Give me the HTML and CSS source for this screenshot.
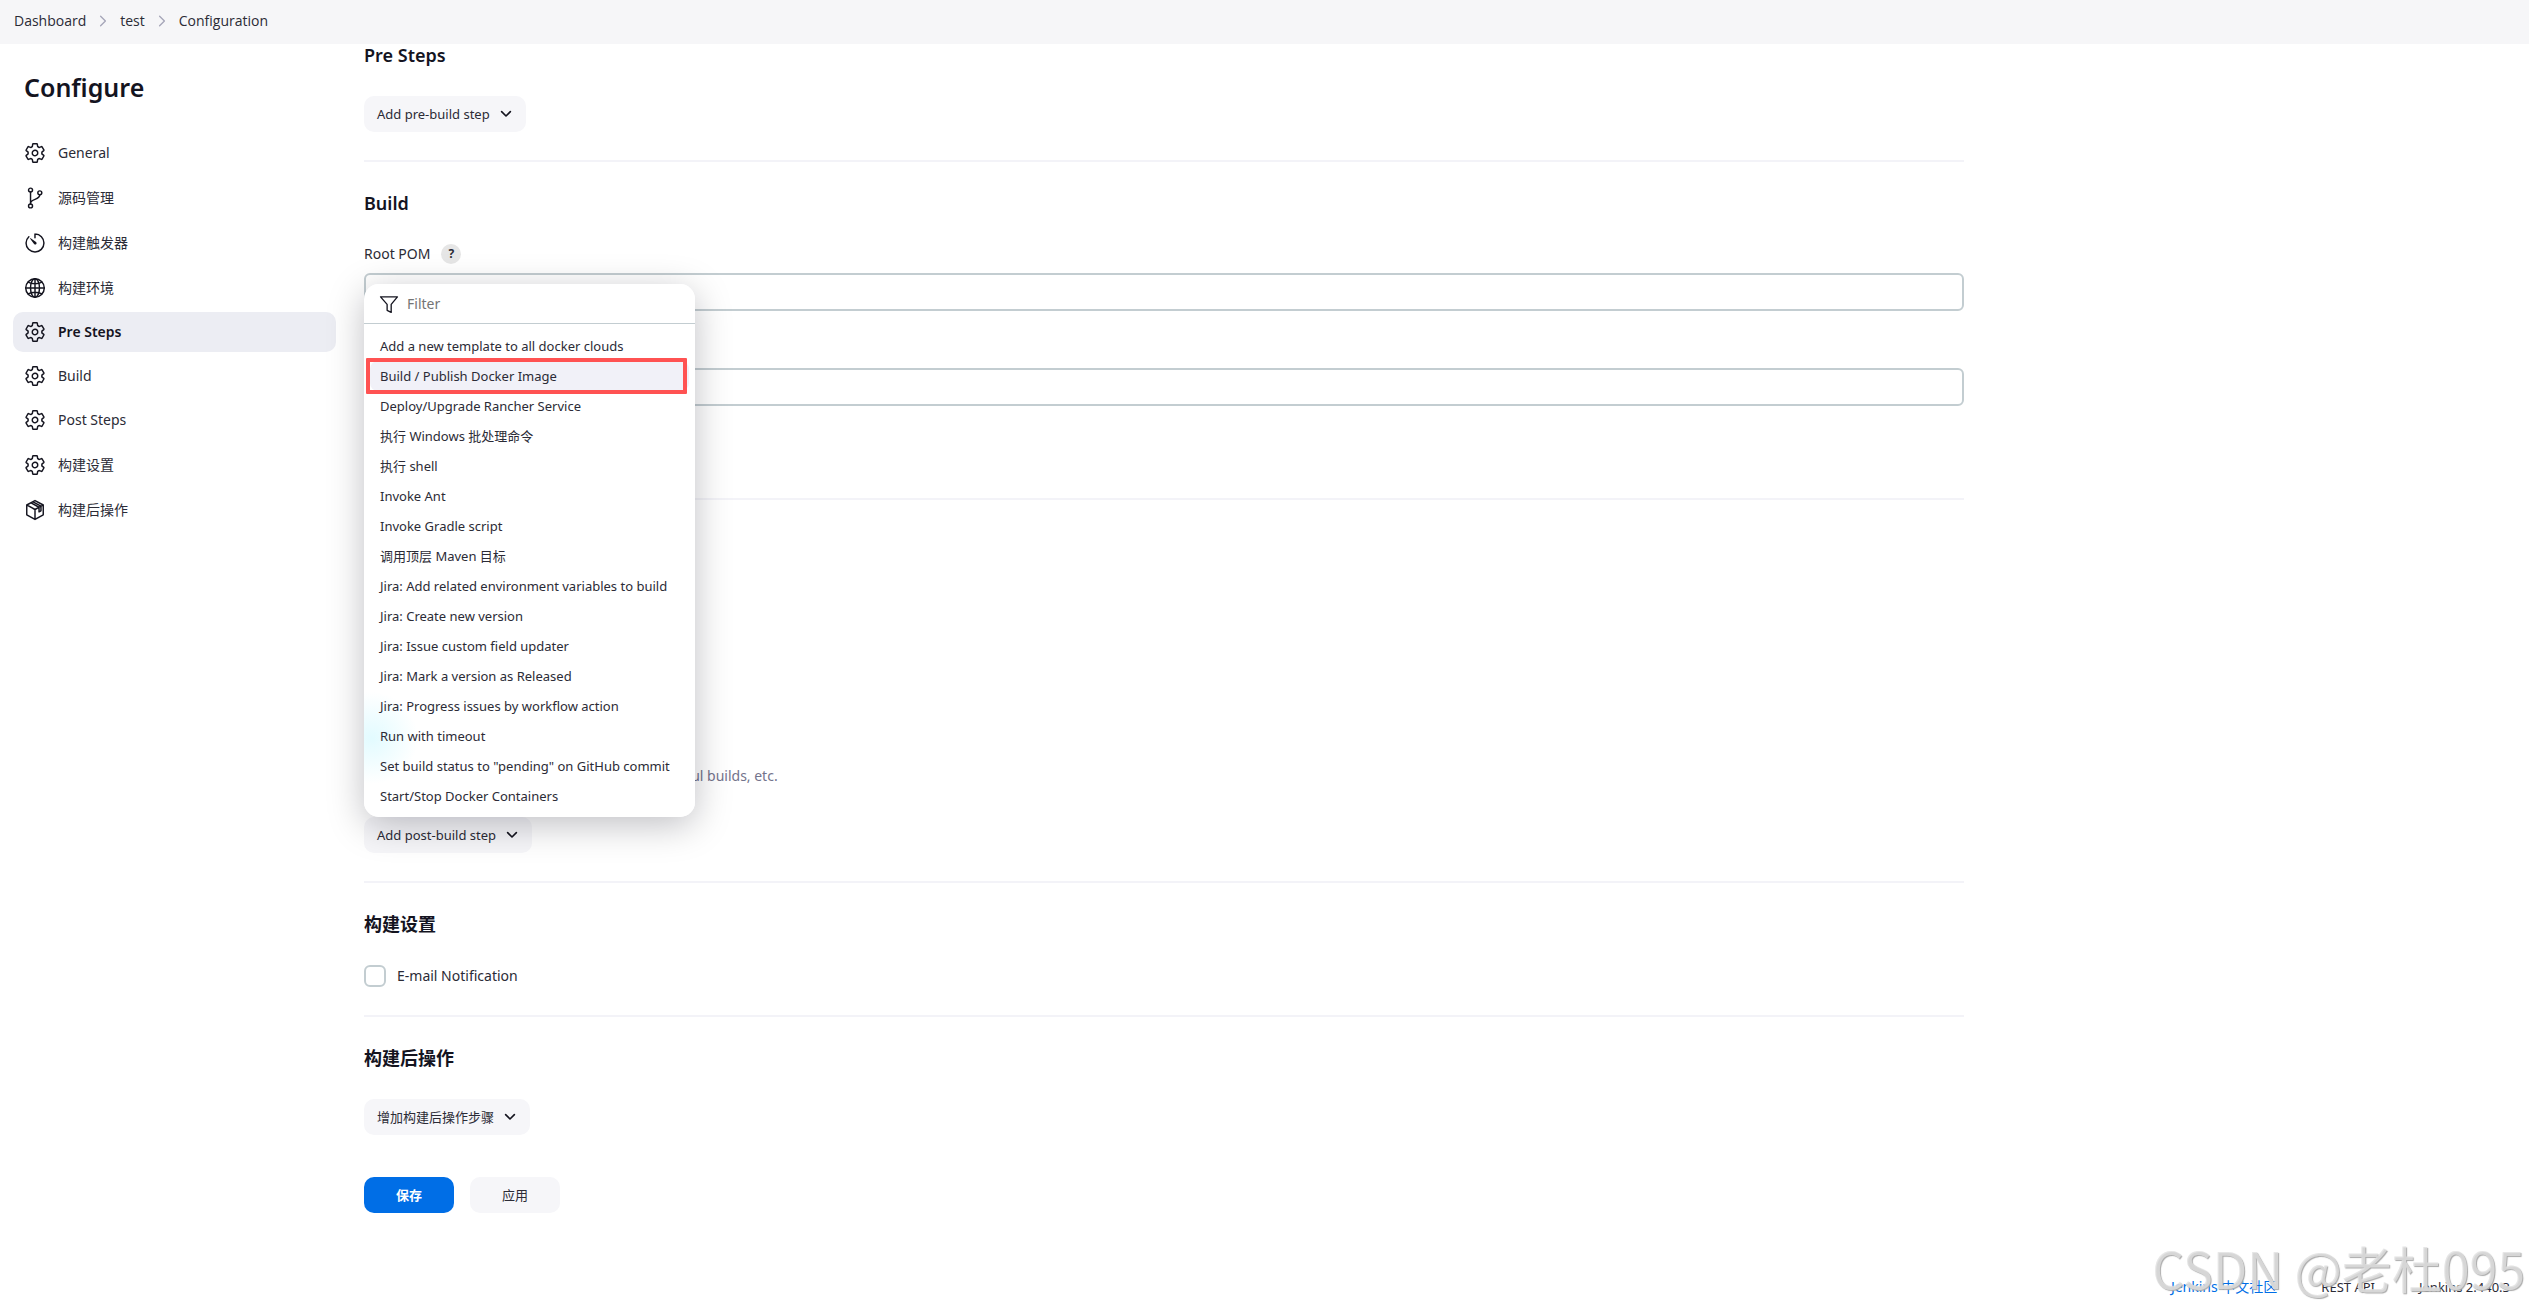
FILE: index.html
```
<!DOCTYPE html>
<html lang="en">
<head>
<meta charset="UTF-8">
<meta name="viewport" content="width=device-width, initial-scale=1.0">
<title>test Config [Jenkins]</title>
<link rel="stylesheet" href="styles.css">
</head>
<body>
    <svg class="sprite" aria-hidden="true">
        <symbol id="icon-settings" viewBox="0 0 512 512"><path d="M262.29 192.31a64 64 0 1057.4 57.4 64.13 64.13 0 00-57.4-57.4zM416.39 256a154.34 154.34 0 01-1.53 20.79l45.21 35.46a10.81 10.81 0 012.45 13.75l-42.77 74a10.81 10.81 0 01-13.14 4.59l-44.9-18.08a16.11 16.11 0 00-15.17 1.75A164.48 164.48 0 01325 400.8a15.94 15.94 0 00-8.82 12.14l-6.73 47.89a11.08 11.08 0 01-10.68 9.17h-85.54a11.11 11.11 0 01-10.69-8.87l-6.72-47.82a16.07 16.07 0 00-9-12.22 155.3 155.3 0 01-21.46-12.57 16 16 0 00-15.11-1.71l-44.89 18.07a10.81 10.81 0 01-13.14-4.58l-42.77-74a10.8 10.8 0 012.45-13.75l38.21-30a16.05 16.05 0 006-14.08c-.36-4.17-.58-8.33-.58-12.5s.21-8.27.58-12.35a16 16 0 00-6.07-13.94l-38.19-30A10.81 10.81 0 0149.48 186l42.77-74a10.81 10.81 0 0113.14-4.59l44.9 18.08a16.11 16.11 0 0015.17-1.75A164.48 164.48 0 01187 111.2a15.94 15.94 0 008.82-12.14l6.73-47.89A11.08 11.08 0 01213.23 42h85.54a11.11 11.11 0 0110.69 8.87l6.72 47.82a16.07 16.07 0 009 12.22 155.3 155.3 0 0121.46 12.57 16 16 0 0015.11 1.71l44.89-18.07a10.81 10.81 0 0113.14 4.58l42.77 74a10.8 10.8 0 01-2.45 13.75l-38.21 30a16.05 16.05 0 00-6.05 14.08c.33 4.14.55 8.3.55 12.47z"/></symbol>
        <symbol id="icon-branch" viewBox="0 0 512 512"><circle cx="152" cy="72" r="46"/><circle cx="152" cy="440" r="46"/><circle cx="368" cy="136" r="46"/><path d="M152 394V118M368 182c0 130-216 80-216 200"/></symbol>
        <symbol id="icon-timer" viewBox="0 0 512 512"><path d="M112.91 112A205 205 0 0048 256c-1.18 113 92 208 208 208 114 .2 208-90 208-208 0-112-90-208-204-208a4.36 4.36 0 00-4.5 4.37V136"/><path class="fill" d="M233.38 278.63l-90-124a9 9 0 0112-12l124 90a32.5 32.5 0 01-37.25 53.26 33.21 33.21 0 01-8.75-7.26z"/></symbol>
        <symbol id="icon-globe" viewBox="0 0 512 512"><circle cx="256" cy="256" r="216"/><ellipse cx="256" cy="256" rx="104" ry="216"/><path d="M256 40v432M40 256h432M96 118c90 50 230 50 320 0M96 394c90-50 230-50 320 0"/></symbol>
        <symbol id="icon-cube" viewBox="0 0 512 512"><path d="M256 36L448 140V368L256 476 64 368V140zM72 144L256 244 440 144M256 244V468M164 92L350 192V300L395 275V168L210 66"/></symbol>
        <symbol id="icon-filter" viewBox="0 0 512 512"><path d="M40 72h432L312 266v206l-104-54V266z"/></symbol>
        <symbol id="icon-chevron" viewBox="0 0 512 512"><path d="M96 168l160 160 160-160"/></symbol>
        <symbol id="icon-crumb" viewBox="0 0 512 512"><path d="M168 80l176 176-176 176"/></symbol>
    </svg>

    <nav id="breadcrumbs">
        <a href="#">Dashboard</a>
        <svg class="crumb"><use href="#icon-crumb"/></svg>
        <a href="#">test</a>
        <svg class="crumb"><use href="#icon-crumb"/></svg>
        <a href="#">Configuration</a>
    </nav>

    <div id="page-body">
        <aside id="side-panel">
            <h1>Configure</h1>
            <nav class="tasks">
                <a class="task" href="#"><svg class="icon"><use href="#icon-settings"/></svg>General</a>
                <a class="task" href="#" lang="zh"><svg class="icon"><use href="#icon-branch"/></svg>源码管理</a>
                <a class="task" href="#" lang="zh"><svg class="icon"><use href="#icon-timer"/></svg>构建触发器</a>
                <a class="task" href="#" lang="zh"><svg class="icon"><use href="#icon-globe"/></svg>构建环境</a>
                <a class="task active" href="#"><svg class="icon"><use href="#icon-settings"/></svg>Pre Steps</a>
                <a class="task" href="#"><svg class="icon"><use href="#icon-settings"/></svg>Build</a>
                <a class="task" href="#"><svg class="icon"><use href="#icon-settings"/></svg>Post Steps</a>
                <a class="task" href="#" lang="zh"><svg class="icon"><use href="#icon-settings"/></svg>构建设置</a>
                <a class="task" href="#" lang="zh"><svg class="icon"><use href="#icon-cube"/></svg>构建后操作</a>
            </nav>
        </aside>

        <main id="main-panel">
            <section class="pre-steps">
                <h2>Pre Steps</h2>
                <button class="btn" type="button">Add pre-build step <svg class="chevron"><use href="#icon-chevron"/></svg></button>
            </section>

            <section class="build">
                <h2>Build</h2>
                <div class="field">
                    <div class="field-label">
                        <label for="root-pom">Root POM</label>
                        <button class="help" type="button">?</button>
                    </div>
                    <input id="root-pom" class="text-input" type="text">
                </div>
                <input class="text-input" type="text" aria-label="Goals and options">

                <div class="dropdown">
                    <div class="dropdown-filter">
                        <svg class="icon"><use href="#icon-filter"/></svg>
                        <input type="text" placeholder="Filter" aria-label="Filter">
                    </div>
                    <div class="dropdown-items">
                        <button type="button">Add a new template to all docker clouds</button>
                        <button type="button" class="selected">Build / Publish Docker Image</button>
                        <button type="button">Deploy/Upgrade Rancher Service</button>
                        <button type="button">执行 Windows 批处理命令</button>
                        <button type="button">执行 shell</button>
                        <button type="button">Invoke Ant</button>
                        <button type="button">Invoke Gradle script</button>
                        <button type="button">调用顶层 Maven 目标</button>
                        <button type="button">Jira: Add related environment variables to build</button>
                        <button type="button">Jira: Create new version</button>
                        <button type="button">Jira: Issue custom field updater</button>
                        <button type="button">Jira: Mark a version as Released</button>
                        <button type="button">Jira: Progress issues by workflow action</button>
                        <button type="button">Run with timeout</button>
                        <button type="button">Set build status to "pending" on GitHub commit</button>
                        <button type="button">Start/Stop Docker Containers</button>
                    </div>
                </div>
            </section>

            <section class="post-steps">
                <p class="description">Should the post-build steps run only for successful builds, etc.</p>
                <button class="btn" type="button">Add post-build step <svg class="chevron"><use href="#icon-chevron"/></svg></button>
            </section>

            <section>
                <h2>构建设置</h2>
                <label class="checkbox"><input type="checkbox">E-mail Notification</label>
            </section>

            <section class="post-build">
                <h2>构建后操作</h2>
                <button class="btn" type="button">增加构建后操作步骤 <svg class="chevron"><use href="#icon-chevron"/></svg></button>
            </section>

            <div class="actions">
                <button class="btn primary" type="submit">保存</button>
                <button class="btn" type="button">应用</button>
            </div>
        </main>
    </div>

    <footer>
        <a class="community" href="#">Jenkins 中文社区</a>
        <a href="#">REST API</a>
        <a href="#">Jenkins 2.440.3</a>
    </footer>
    <div class="watermark">CSDN @老杜095</div>
</body>
</html>
```

FILE: styles.css
```
* {
    box-sizing: border-box;
}
body {
    display: flex;
    flex-direction: column;
    min-height: 100vh;
    margin: 0;
    font-family: "Noto Sans", "Noto Sans CJK SC", sans-serif;
    font-size: 14px;
    line-height: 20px;
    color: #2b2b36;
    background-color: #fff;
}
a {
    color: inherit;
    text-decoration: none;
}
button, input {
    font: inherit;
    color: inherit;
}
h1, h2 {
    margin: 0;
    font-weight: 600;
    color: #14141f;
}
h1 {
    font-size: 25px;
    line-height: 32px;
}
h2 {
    font-size: 18px;
    line-height: 24px;
}
svg {
    fill: none;
    stroke: #14141f;
    stroke-width: 34;
    stroke-linecap: round;
    stroke-linejoin: round;
    flex-shrink: 0;
}
.fill {
    fill: #14141f;
    stroke: none;
}
.sprite {
    display: none;
}
.icon {
    width: 22px;
    height: 22px;
}
.chevron {
    width: 14px;
    height: 14px;
    stroke-width: 60;
}
.crumb {
    width: 14px;
    height: 14px;
    stroke: #a5a5b8;
    stroke-width: 48;
}
#breadcrumbs {
    display: flex;
    align-items: center;
    gap: 10px;
    height: 44px;
    padding: 0 14px 2px;
    background-color: #f6f6f8;
    font-family: "Open Sans", sans-serif;
}
#page-body {
    display: flex;
    flex: 1;
}
#side-panel {
    width: 364px;
    padding: 27px 28px 0 13px;
}
#side-panel h1 {
    padding-left: 11px;
}
.tasks {
    display: flex;
    flex-direction: column;
    gap: 4px;
    margin-top: 30px;
}
.task {
    display: flex;
    align-items: center;
    gap: 12px;
    height: 40px;
    padding: 0 11px;
    border-radius: 10px;
}
.task:lang(zh) {
    height: 41px;
}
.task.active {
    background-color: #ecedf3;
    font-weight: 600;
    color: #14141f;
}
#main-panel {
    position: relative;
    width: 1600px;
    max-width: calc(100% - 364px);
}
section {
    padding: 29px 0 28px;
    border-bottom: 2px solid #f3f3f8;
}
.pre-steps {
    margin-top: -1px;
    padding-top: 0;
}
.btn {
    display: flex;
    align-items: center;
    justify-content: center;
    gap: 9px;
    height: 36px;
    padding: 0 13px;
    border: none;
    border-radius: 10px;
    background-color: #f6f6f9;
    font-size: 13px;
    cursor: pointer;
}
h2 + .btn {
    margin-top: 29px;
}
.field-label {
    display: flex;
    align-items: center;
    gap: 11px;
    margin: 29px 0 9px;
}
.help {
    width: 20px;
    height: 20px;
    padding: 0;
    border: none;
    border-radius: 50%;
    background-color: #e6e6e6;
    font-size: 12px;
    font-weight: 700;
}
.text-input {
    display: block;
    width: 100%;
    height: 38px;
    padding: 0 10px;
    border: 2px solid #c3cdd1;
    border-radius: 6px;
}
.field {
    margin-bottom: 57px;
}
.build {
    position: relative;
    padding-bottom: 92px;
}
.dropdown {
    position: absolute;
    top: 122px;
    left: 0;
    z-index: 1;
    width: 331px;
    border-radius: 15px;
    background: radial-gradient(circle at 8px 454px, #e2fbff, #fff 46px);
    box-shadow: 0 8px 36px rgba(0, 0, 20, 0.25);
}
.dropdown-filter {
    display: flex;
    align-items: center;
    gap: 8px;
    height: 40px;
    padding: 0 15px;
    border-bottom: 1px solid #c3cdd1;
}
.dropdown-filter .icon {
    width: 20px;
    height: 20px;
}
.dropdown-filter input {
    flex: 1;
    min-width: 0;
    padding: 0;
    border: none;
    outline: none;
    background: none;
}
.dropdown-filter input::placeholder {
    color: #757575;
}
.dropdown-items {
    padding: 7px 6px 6px;
}
.dropdown-items button {
    display: block;
    width: 100%;
    height: 30px;
    padding: 0 10px;
    border: none;
    border-radius: 8px;
    background: none;
    font-size: 13px;
    text-align: left;
    white-space: nowrap;
}
.dropdown-items .selected {
    position: relative;
    background-color: #f1f1f8;
}
.selected::after {
    content: "";
    position: absolute;
    inset: -3px 2px -3px -4px;
    border: 4px solid #ff5252;
    border-radius: 1px;
}
.post-steps {
    padding-top: 266px;
}
.description {
    margin: 0 0 31px;
    padding: 0 8px;
    color: #73738c;
}
.checkbox {
    display: flex;
    align-items: center;
    gap: 11px;
    margin-top: 29px;
}
.checkbox input {
    appearance: none;
    width: 22px;
    height: 22px;
    margin: 0;
    border: 2px solid #c3cdd1;
    border-radius: 6px;
}
.post-build {
    border-bottom: none;
}
.actions {
    display: flex;
    gap: 16px;
    margin-top: 14px;
}
.actions .btn {
    width: 90px;
}
.actions .primary {
    background-color: #006ee6;
    color: #fff;
    font-weight: 700;
}
footer {
    display: flex;
    justify-content: flex-end;
    gap: 44px;
    padding: 0 19px 16px;
    font-size: 13px;
}
.community {
    color: #006ee6;
    font-size: 14px;
}
.watermark {
    position: absolute;
    right: 4px;
    bottom: 14px;
    font-family: "Noto Sans CJK SC", sans-serif;
    font-size: 50px;
    line-height: 64px;
    color: rgba(225, 225, 225, 0.8);
    text-shadow: 1px 1px 1px #aaa;
    white-space: nowrap;
    pointer-events: none;
}
```
